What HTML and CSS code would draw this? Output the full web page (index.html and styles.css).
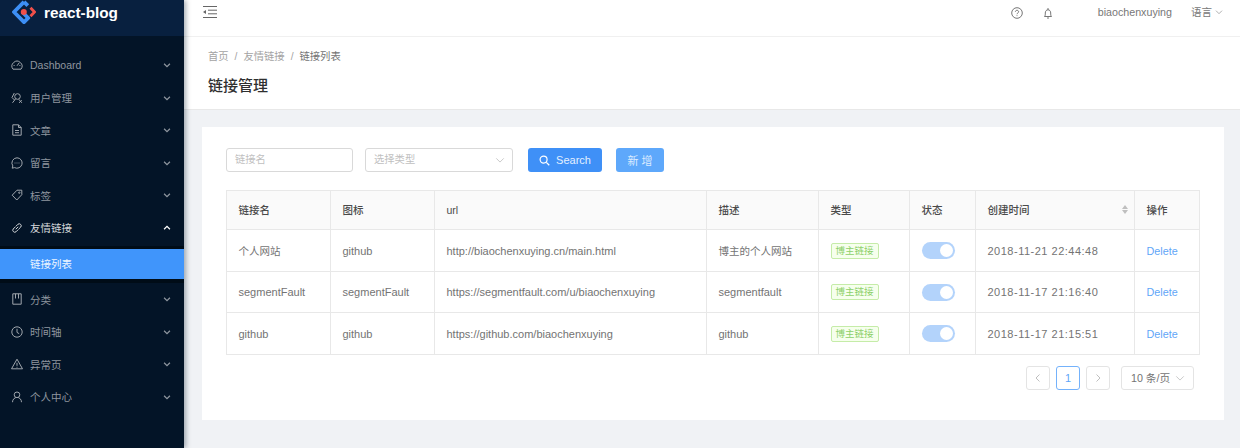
FILE: index.html
```html
<!DOCTYPE html>
<html lang="zh-CN">
<head>
    <meta charset="UTF-8">
    <title>react-blog</title>
    <link rel="stylesheet" href="styles.css">
</head>
<body>
    <svg class="defs" width="0" height="0">
        <symbol id="chev" viewBox="0 0 12 12"><path d="M2.5 4.5 6 8l3.5-3.5" fill="none" stroke="currentColor" stroke-width="1.5"/></symbol>
        <symbol id="thin" viewBox="0 0 12 12"><path d="M1.5 4 6 8.5 10.5 4" fill="none" stroke="currentColor" stroke-width="1"/></symbol>
    </svg>

    <aside class="sider">
        <div class="logo">
            <svg width="24" height="24" viewBox="0 0 24 24">
                <path d="M12 1.800 2 12l10 10.200 4.200-4.200L10.200 12" fill="none" stroke="#3d8ff5" stroke-width="3.800" stroke-linejoin="round"/>
                <path d="M12 1.800 15.800 5.600" fill="none" stroke="#3d8ff5" stroke-width="3.800"/>
                <path d="M18.500 7.800 22.500 12l-4 4.200" fill="none" stroke="#f0504a" stroke-width="2.800"/>
                <circle cx="11.800" cy="12" r="3" fill="#f0504a"/>
            </svg>
            <span>react-blog</span>
        </div>

        <ul class="menu">
            <li class="menu-item">
                <svg class="menu-icon" viewBox="0 0 12 12"><path d="M2 10.200A5 5 0 1 1 10 10.200zM6 6.800 8.200 3.800M2.600 6.500h1M8.400 6.500h1"/></svg>
                <span>Dashboard</span>
                <svg class="arrow"><use href="#chev"/></svg>
            </li>
            <li class="menu-item">
                <svg class="menu-icon" viewBox="0 0 12 12"><circle cx="6.500" cy="4.500" r="2.800"/><path d="M4.600 6.800 1.500 10.800M3.300 1 1 5.500l2.500 2.500M7.800 7.300l3 3.500M8 10.800l2.800-2.500"/></svg>
                <span>用户管理</span>
                <svg class="arrow"><use href="#chev"/></svg>
            </li>
            <li class="menu-item">
                <svg class="menu-icon" viewBox="0 0 12 12"><path d="M1.800.8h5.700L10.200 3.500v7.700H1.800zM7.500.8v2.700h2.700M4 6.500h4M4 8.700h4"/></svg>
                <span>文章</span>
                <svg class="arrow"><use href="#chev"/></svg>
            </li>
            <li class="menu-item">
                <svg class="menu-icon" viewBox="0 0 12 12"><path d="M6 .8a5.200 5.200 0 1 1-2.500 9.800L1.200 11.200l.6-2.300A5.200 5.200 0 0 1 6 .8zM3.600 6h.8M5.600 6h.8M7.600 6h.8"/></svg>
                <span>留言</span>
                <svg class="arrow"><use href="#chev"/></svg>
            </li>
            <li class="menu-item">
                <svg class="menu-icon" viewBox="0 0 12 12"><path d="M6 1.200h4.800v4.500L5.800 11 1.200 6.200z"/><circle cx="8.300" cy="3.700" r=".7"/></svg>
                <span>标签</span>
                <svg class="arrow"><use href="#chev"/></svg>
            </li>
            <li class="menu-item open">
                <svg class="menu-icon" viewBox="0 0 12 12"><path d="M4.800 7.200 7.200 4.800M4.400 4.800 2.200 7a2 2 0 0 0 2.800 2.800L7.200 7.600M4.800 4.400 7 2.200A2 2 0 0 1 9.800 5L7.600 7.200"/></svg>
                <span>友情链接</span>
                <svg class="arrow up"><use href="#chev"/></svg>
            </li>
            <li class="submenu"><div class="submenu-item">链接列表</div></li>
            <li class="menu-item">
                <svg class="menu-icon" viewBox="0 0 12 12"><path d="M1.800.8h8.400v10.400H1.800zM4.500.8v4.700M7.500.8v4.700"/></svg>
                <span>分类</span>
                <svg class="arrow"><use href="#chev"/></svg>
            </li>
            <li class="menu-item">
                <svg class="menu-icon" viewBox="0 0 12 12"><circle cx="6" cy="6" r="5.200"/><path d="M6 2.800v3.600l2.200 1.300"/></svg>
                <span>时间轴</span>
                <svg class="arrow"><use href="#chev"/></svg>
            </li>
            <li class="menu-item">
                <svg class="menu-icon" viewBox="0 0 12 12"><path d="M6 1.200 11.500 10.800H.5zM6 4.800v3M6 8.800v.8"/></svg>
                <span>异常页</span>
                <svg class="arrow"><use href="#chev"/></svg>
            </li>
            <li class="menu-item">
                <svg class="menu-icon" viewBox="0 0 12 12"><circle cx="6" cy="3.800" r="2.800"/><path d="M1.500 11.200c0-2.800 2-4.800 4.500-4.800s4.500 2 4.500 4.800"/></svg>
                <span>个人中心</span>
                <svg class="arrow"><use href="#chev"/></svg>
            </li>
        </ul>
    </aside>

    <div class="main">
        <header class="topbar">
            <svg class="fold" width="14" height="12" viewBox="0 0 14 12">
                <path d="M0 .5h14M5 4.200h9M5 7.800h9M0 11.500h14" fill="none" stroke="#666" stroke-width="1"/>
                <path d="M0 6 3 4v4z" fill="#666"/>
            </svg>
            <div class="topbar-right">
                <svg class="top-icon" viewBox="0 0 12 12"><circle cx="6" cy="6" r="5.300"/><path d="M4.400 4.800c0-2 3.200-2 3.200 0 0 1.200-1.600 1.200-1.600 2.400M6 8.300v.8"/></svg>
                <svg class="top-icon bell" viewBox="0 0 12 12"><path d="M2.500 9.500c.8-.8.8-1.800.8-3.500 0-1.800 1-3.200 2.700-3.200s2.700 1.400 2.700 3.200c0 1.700 0 2.700.8 3.500zM6 1v1.800M5 11h2"/></svg>
                <span class="user">biaochenxuying</span>
                <span class="lang">语言</span>
                <svg class="lang-arrow"><use href="#thin"/></svg>
            </div>
        </header>

        <section class="page-head">
            <div class="crumbs"><span>首页</span><i>/</i><span>友情链接</span><i>/</i><b>链接列表</b></div>
            <h1>链接管理</h1>
        </section>

        <div class="content">
            <div class="card">
                <div class="filters">
                    <div class="field name-field">链接名</div>
                    <div class="field type-field">选择类型<svg class="field-arrow"><use href="#thin"/></svg></div>
                    <button class="btn search-btn">
                        <svg width="11" height="11" viewBox="0 0 12 12"><circle cx="5" cy="5" r="3.800" fill="none" stroke="#fff" stroke-width="1.300"/><path d="M8 8l3.200 3.200" stroke="#fff" stroke-width="1.400"/></svg>
                        Search
                    </button>
                    <button class="btn add-btn">新 增</button>
                </div>

                <table class="links">
                    <colgroup>
                        <col class="c1"><col class="c2"><col class="c3"><col class="c4"><col class="c5"><col class="c6"><col class="c7"><col class="c8">
                    </colgroup>
                    <thead>
                        <tr>
                            <th>链接名</th>
                            <th>图标</th>
                            <th>url</th>
                            <th>描述</th>
                            <th>类型</th>
                            <th>状态</th>
                            <th><div class="sort-head">创建时间<span class="sorter"><i class="tri-up"></i><i class="tri-down"></i></span></div></th>
                            <th>操作</th>
                        </tr>
                    </thead>
                    <tbody>
                        <tr>
                            <td class="cn">个人网站</td>
                            <td>github</td>
                            <td>http://biaochenxuying.cn/main.html</td>
                            <td class="cn">博主的个人网站</td>
                            <td><span class="tag">博主链接</span></td>
                            <td><span class="switch"></span></td>
                            <td class="time">2018-11-21 22:44:48</td>
                            <td><a class="del">Delete</a></td>
                        </tr>
                        <tr>
                            <td>segmentFault</td>
                            <td>segmentFault</td>
                            <td>https://segmentfault.com/u/biaochenxuying</td>
                            <td>segmentfault</td>
                            <td><span class="tag">博主链接</span></td>
                            <td><span class="switch"></span></td>
                            <td class="time">2018-11-17 21:16:40</td>
                            <td><a class="del">Delete</a></td>
                        </tr>
                        <tr>
                            <td>github</td>
                            <td>github</td>
                            <td>https://github.com/biaochenxuying</td>
                            <td>github</td>
                            <td><span class="tag">博主链接</span></td>
                            <td><span class="switch"></span></td>
                            <td class="time">2018-11-17 21:15:51</td>
                            <td><a class="del">Delete</a></td>
                        </tr>
                    </tbody>
                </table>

                <div class="pager">
                    <span class="page-btn"><svg width="8" height="10" viewBox="0 0 8 10"><path d="M5.500 1.500 2 5l3.500 3.500" fill="none" stroke="#bfbfbf"/></svg></span>
                    <span class="page-btn current">1</span>
                    <span class="page-btn"><svg width="8" height="10" viewBox="0 0 8 10"><path d="M2.500 1.500 6 5 2.500 8.500" fill="none" stroke="#bfbfbf"/></svg></span>
                    <span class="page-size">10 条/页<svg class="field-arrow"><use href="#thin"/></svg></span>
                </div>
            </div>
        </div>
    </div>
</body>
</html>
```

FILE: styles.css
```css
* {
    box-sizing: border-box;
}

html, body {
    margin: 0;
    height: 448px;
    overflow: hidden;
}

body {
    display: flex;
    font-family: "Liberation Sans", "Noto Sans CJK SC", sans-serif;
    font-size: 11px;
    color: #737373;
    background-color: #f0f2f5;
}

.defs {
    position: absolute;
}

/* sidebar */
.sider {
    width: 184px;
    flex-shrink: 0;
    background-color: #031427;
    box-shadow: 2px 0 5px rgba(0, 21, 41, 0.35);
    position: relative;
    z-index: 2;
}

.logo {
    height: 36px;
    display: flex;
    align-items: flex-start;
    padding-left: 12px;
    background-color: #08203f;
    color: #fff;
    font-size: 15.300px;
    font-weight: bold;
}

.logo span {
    margin-left: 8px;
    line-height: 26px;
}

.menu {
    list-style: none;
    margin: 0;
    padding: 12.750px 0 0;
    font-size: 10.500px;
}

.menu-item {
    height: 32.500px;
    display: flex;
    align-items: center;
    padding-left: 11px;
    color: #8f969f;
}

.menu-icon {
    width: 12px;
    height: 12px;
    margin-right: 7px;
    fill: none;
    stroke: #a0a6ad;
    stroke-width: 1;
}

.arrow {
    width: 10px;
    height: 10px;
    margin-left: auto;
    margin-right: 12px;
}

.arrow.up {
    transform: rotate(180deg);
}

.open {
    color: #d5d8db;
}

.open .menu-icon {
    stroke: #d5d8db;
}

.open .arrow {
    color: #fff;
}

.submenu {
    margin-top: 1.750px;
    padding: 3px 0 4.500px;
    background-color: #000c17;
}

.submenu-item {
    height: 30px;
    line-height: 30px;
    padding-left: 30px;
    background-color: #4095fb;
    color: #eef5ff;
}

/* main column */
.main {
    flex: 1;
    min-width: 0;
    display: flex;
    flex-direction: column;
}

.topbar {
    height: 37px;
    flex-shrink: 0;
    display: flex;
    justify-content: space-between;
    padding: 5px 17px 0 19px;
    background-color: #fff;
    border-bottom: 1px solid #f0f0f0;
}

.fold {
    margin-top: 1px;
}

.topbar-right {
    display: flex;
    align-items: flex-start;
    color: #777;
}

.top-icon {
    width: 12px;
    height: 12px;
    margin-top: 2px;
    margin-right: 19px;
    fill: none;
    stroke: #666;
    stroke-width: 0.9;
}

.bell {
    margin-right: 44px;
}

.user {
    font-size: 10.700px;
    line-height: 14px;
    margin-right: 19px;
}

.lang {
    font-size: 10.500px;
    line-height: 14px;
}

.lang-arrow {
    width: 8px;
    height: 8px;
    margin: 3px 0 0 3px;
    color: #888;
}

.page-head {
    height: 73px;
    flex-shrink: 0;
    padding: 12px 24px 0;
    background-color: #fff;
    border-bottom: 1px solid #e8e8e8;
}

.crumbs {
    font-size: 10.300px;
    line-height: 16px;
    color: #a3a3a3;
}

.crumbs i {
    font-style: normal;
    margin: 0 6px;
}

.crumbs b {
    font-weight: normal;
    color: #737373;
}

h1 {
    margin: 9px 0 0;
    font-size: 15px;
    line-height: 24px;
    font-weight: 500;
    color: #2f2f2f;
}

.content {
    flex: 1;
    padding: 17px 16px 0 18px;
}

.card {
    height: 293px;
    padding: 21px 24px 0;
    background-color: #fff;
}

/* filter row */
.filters {
    display: flex;
    align-items: center;
    height: 24px;
    margin-bottom: 18px;
}

.field {
    height: 24px;
    line-height: 22px;
    padding-left: 8px;
    border: 1px solid #d9d9d9;
    border-radius: 3px;
    color: #bfbfbf;
    font-size: 10.300px;
}

.name-field {
    width: 127px;
    margin-right: 12px;
}

.type-field {
    width: 148px;
    margin-right: 15px;
    display: flex;
    justify-content: space-between;
    align-items: center;
    padding-right: 7px;
}

.field-arrow {
    width: 10px;
    height: 10px;
    color: #bfbfbf;
}

.btn {
    height: 24px;
    border: 0;
    border-radius: 3px;
    color: #fff;
    font: inherit;
    display: flex;
    align-items: center;
    justify-content: center;
    padding: 0;
}

.search-btn {
    width: 74px;
    margin-right: 14px;
    background-color: #3f90f7;
    color: #e3efff;
    gap: 6px;
}

.add-btn {
    width: 48px;
    background-color: #5ea8fb;
    color: #dcebff;
}

/* table */
.links {
    width: 973px;
    table-layout: fixed;
    border-collapse: collapse;
    border: 1px solid #e8e8e8;
}

.c1, .c2 { width: 104px; }
.c3 { width: 272px; }
.c4 { width: 112px; }
.c5 { width: 91px; }
.c6 { width: 66px; }
.c7 { width: 159px; }
.c8 { width: 65px; }

.links th,
.links td {
    padding: 0 11.500px;
    border: 1px solid #e8e8e8;
    text-align: left;
    white-space: nowrap;
}

.links th {
    height: 39px;
    padding-bottom: 1px;
    font-size: 10.500px;
    font-weight: 500;
    background-color: #fafafa;
    color: #4a4a4a;
}

.links td {
    height: 41.500px;
    padding-top: 1px;
    color: #737373;
}

.links td.cn {
    font-size: 10.500px;
}

.sort-head {
    display: flex;
    justify-content: space-between;
    align-items: center;
    margin-right: -5px;
}

.sorter {
    display: flex;
    flex-direction: column;
    gap: 1px;
}

.tri-up, .tri-down {
    width: 0;
    height: 0;
    border-left: 3px solid transparent;
    border-right: 3px solid transparent;
}

.tri-up { border-bottom: 4px solid #bfbfbf; }
.tri-down { border-top: 4px solid #bfbfbf; }

.tag {
    display: inline-block;
    height: 16px;
    width: 48px;
    line-height: 14px;
    font-size: 9.500px;
    text-align: center;
    color: #8dd06a;
    background-color: #f6ffed;
    border: 1px solid #c5eca8;
    border-radius: 2px;
    vertical-align: middle;
}

.switch {
    display: block;
    width: 33px;
    height: 17px;
    border-radius: 9px;
    background-color: #b3d3fb;
    position: relative;
}

.switch::after {
    content: "";
    position: absolute;
    top: 2px;
    right: 2px;
    width: 13px;
    height: 13px;
    border-radius: 50%;
    background-color: #fff;
}

.links td.time {
    letter-spacing: 0.500px;
}

.del {
    color: #5fa6f8;
    font-size: 10.800px;
}

/* pagination */
.pager {
    display: flex;
    justify-content: flex-end;
    align-items: center;
    margin-top: 11px;
    padding-right: 6px;
    gap: 6px;
}

.page-btn {
    width: 24px;
    height: 24px;
    display: flex;
    align-items: center;
    justify-content: center;
    border: 1px solid #e4e4e4;
    border-radius: 3px;
}

.current {
    border-color: #74b2fb;
    color: #5fa6f8;
}

.page-size {
    width: 73px;
    height: 24px;
    margin-left: 5px;
    display: flex;
    align-items: center;
    justify-content: space-between;
    padding: 0 8px 0 9px;
    border: 1px solid #e4e4e4;
    border-radius: 3px;
    font-size: 10.700px;
}
```
